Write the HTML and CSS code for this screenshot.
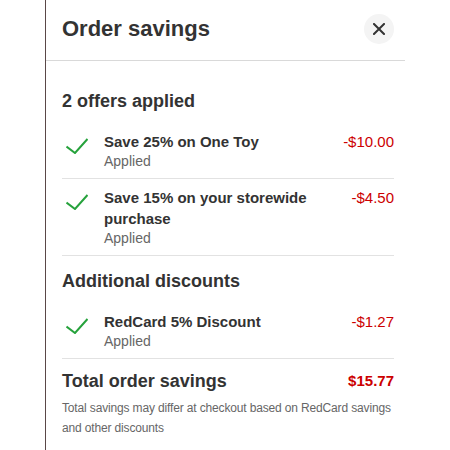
FILE: index.html
```html
<!DOCTYPE html>
<html lang="en">
<head>
<meta charset="utf-8">
<title>Order savings</title>
<link rel="stylesheet" href="styles.css">
</head>
<body>
<div class="panel">
  <header class="panel-header">
    <h1 class="panel-title">Order savings</h1>
    <button class="close-btn" aria-label="Close">
      <svg width="12" height="12" viewBox="0 0 12 12"><path d="M1 1 L11 11 M11 1 L1 11" stroke="#333" stroke-width="2" fill="none" stroke-linecap="square"/></svg>
    </button>
  </header>
  <div class="panel-body">
    <section class="section section-first">
      <h2 class="section-title">2 offers applied</h2>
      <div class="item">
        <div class="item-check"><svg width="22" height="16" viewBox="0 0 22 16"><path d="M0.5 8.5 L9 15 L21.5 1" stroke="#26a23c" stroke-width="2" fill="none"/></svg></div>
        <div class="item-text">
          <div class="item-name">Save 25% on One Toy</div>
          <div class="item-status">Applied</div>
        </div>
        <div class="item-amount">-$10.00</div>
      </div>
      <div class="item">
        <div class="item-check"><svg width="22" height="16" viewBox="0 0 22 16"><path d="M0.5 8.5 L9 15 L21.5 1" stroke="#26a23c" stroke-width="2" fill="none"/></svg></div>
        <div class="item-text">
          <div class="item-name">Save 15% on your storewide purchase</div>
          <div class="item-status">Applied</div>
        </div>
        <div class="item-amount">-$4.50</div>
      </div>
    </section>
    <section class="section section-additional">
      <h2 class="section-title">Additional discounts</h2>
      <div class="item">
        <div class="item-check"><svg width="22" height="16" viewBox="0 0 22 16"><path d="M0.5 8.5 L9 15 L21.5 1" stroke="#26a23c" stroke-width="2" fill="none"/></svg></div>
        <div class="item-text">
          <div class="item-name">RedCard 5% Discount</div>
          <div class="item-status">Applied</div>
        </div>
        <div class="item-amount">-$1.27</div>
      </div>
    </section>
    <section class="section section-total">
      <div class="total-row">
        <h2 class="section-title">Total order savings</h2>
        <div class="total-amount">$15.77</div>
      </div>
      <p class="footnote">Total savings may differ at checkout based on RedCard savings and other discounts</p>
    </section>
  </div>
</div>
</body>
</html>
```

FILE: styles.css
```css
html, body {
  margin: 0;
  padding: 0;
  background: #fff;
}
body {
  font-family: "Liberation Sans", Arial, sans-serif;
  color: #333;
}
.panel {
  margin-left: 45px;
  width: 360px;
  min-height: 450px;
  border-left: 1px solid #5a4848;
  box-sizing: border-box;
}
.panel-header {
  display: flex;
  justify-content: space-between;
  align-items: center;
  height: 61px;
  box-sizing: border-box;
  padding: 0 11px 2px 16px;
  border-bottom: 1px solid #d9d9d9;
}
.panel-title {
  margin: 0;
  font-size: 22px;
  line-height: 28px;
  font-weight: 700;
  color: #333;
}
.close-btn {
  width: 30px;
  height: 30px;
  border: none;
  border-radius: 50%;
  background: #f4f4f4;
  padding: 0;
  display: flex;
  align-items: center;
  justify-content: center;
}
.panel-body {
  padding: 0 11px 0 16px;
}
.section-first {
  padding-top: 28px;
}
.section-additional {
  padding-top: 13px;
}
.section-total {
  padding-top: 10px;
}
.section-title {
  margin: 0 0 10px;
  font-size: 18px;
  line-height: 24px;
  font-weight: 700;
  color: #333;
}
.item {
  display: flex;
  align-items: flex-start;
  padding: 8px 0;
  border-bottom: 1px solid #e2e2e2;
}
.item-check {
  width: 42px;
  flex: none;
  padding-left: 4px;
  padding-top: 7px;
  box-sizing: border-box;
  display: flex;
}
.item-text {
  flex: 1;
  padding-right: 16px;
}
.item-name {
  font-size: 15px;
  line-height: 21px;
  font-weight: 700;
  color: #333;
}
.item-status {
  font-size: 14px;
  line-height: 18px;
  color: #666;
}
.item-amount {
  font-size: 15px;
  line-height: 21px;
  color: #cc0000;
  white-space: nowrap;
}
.total-row {
  display: flex;
  justify-content: space-between;
  align-items: flex-start;
}
.total-row .section-title {
  margin: 0;
}
.total-amount {
  font-size: 15px;
  line-height: 24px;
  font-weight: 700;
  color: #cc0000;
}
.footnote {
  margin: 5px 0 0;
  font-size: 12px;
  line-height: 20px;
  letter-spacing: -0.15px;
  color: #666;
}
```
